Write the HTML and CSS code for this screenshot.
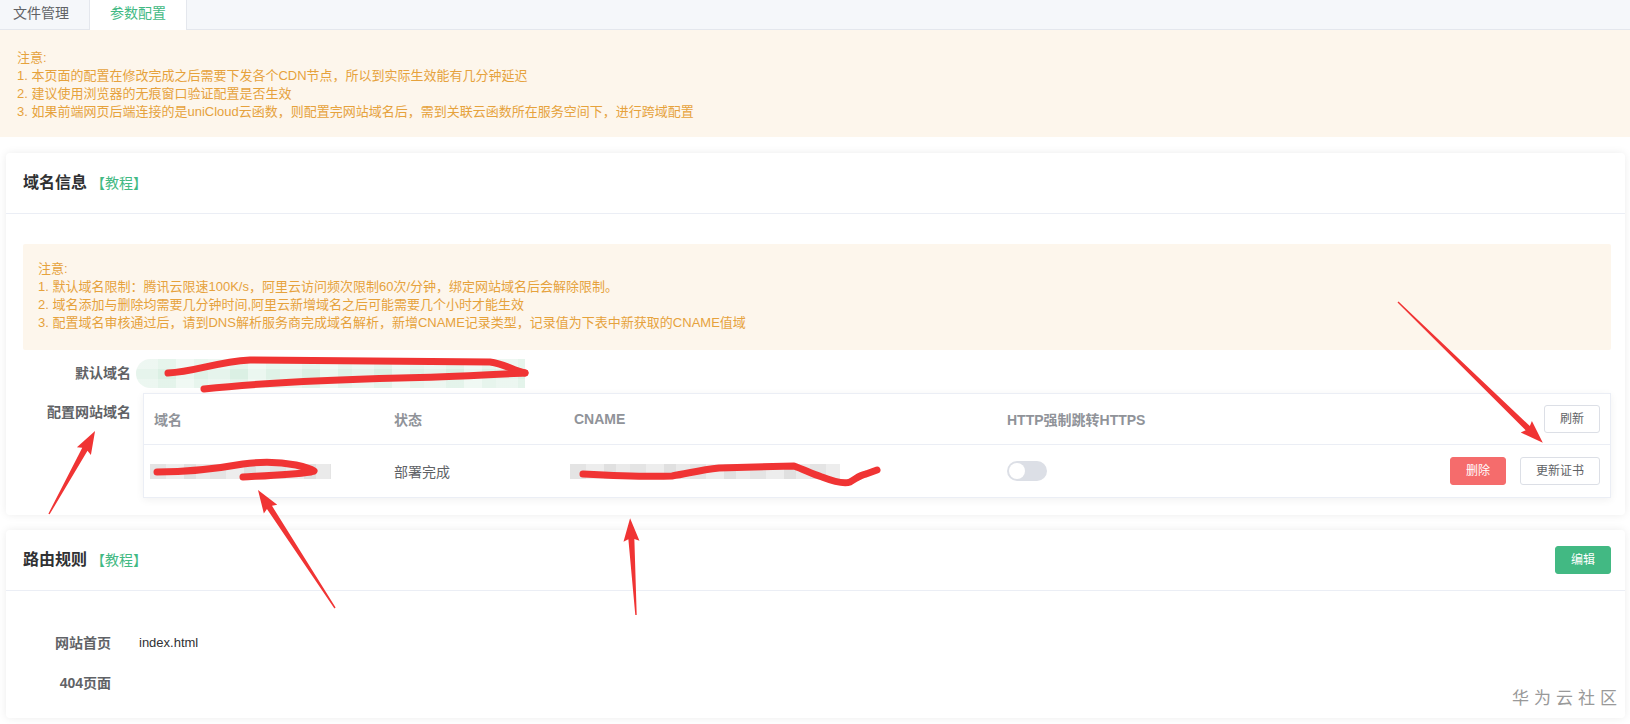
FILE: index.html
```html
<!DOCTYPE html>
<html lang="zh-CN">
<head>
<meta charset="utf-8">
<title>参数配置</title>
<link rel="stylesheet" href="styles.css">
</head>
<body>
  <nav class="tabs">
    <div class="tab">文件管理</div>
    <div class="tab active">参数配置</div>
  </nav>

  <div class="notice notice-top">
    <p>注意:</p>
    <p>1. 本页面的配置在修改完成之后需要下发各个CDN节点，所以到实际生效能有几分钟延迟</p>
    <p>2. 建议使用浏览器的无痕窗口验证配置是否生效</p>
    <p>3. 如果前端网页后端连接的是uniCloud云函数，则配置完网站域名后，需到关联云函数所在服务空间下，进行跨域配置</p>
  </div>

  <main class="content">
    <section class="card">
      <header class="card-header">
        <div class="card-title">域名信息<span class="card-link">【教程】</span></div>
      </header>
      <div class="card-body">
        <div class="notice notice-inner">
          <p>注意:</p>
          <p>1. 默认域名限制：腾讯云限速100K/s，阿里云访问频次限制60次/分钟，绑定网站域名后会解除限制。</p>
          <p>2. 域名添加与删除均需要几分钟时间,阿里云新增域名之后可能需要几个小时才能生效</p>
          <p>3. 配置域名审核通过后，请到DNS解析服务商完成域名解析，新增CNAME记录类型，记录值为下表中新获取的CNAME值域</p>
        </div>

        <div class="form-row form-row-default">
          <div class="form-label">默认域名</div>
          <div class="domain-mask"></div>
        </div>

        <div class="form-row form-row-table">
          <div class="form-label">配置网站域名</div>
          <div class="domain-table">
            <div class="t-row t-head">
              <div class="t-cell">域名</div>
              <div class="t-cell">状态</div>
              <div class="t-cell">CNAME</div>
              <div class="t-cell">HTTP强制跳转HTTPS</div>
              <div class="t-cell t-ops"><button class="btn">刷新</button></div>
            </div>
            <div class="t-row t-body">
              <div class="t-cell"><span class="mask mask-domain"></span></div>
              <div class="t-cell">部署完成</div>
              <div class="t-cell"><span class="mask mask-cname"></span></div>
              <div class="t-cell"><span class="switch"><span class="switch-knob"></span></span></div>
              <div class="t-cell t-ops">
                <button class="btn btn-danger">删除</button>
                <button class="btn">更新证书</button>
              </div>
            </div>
          </div>
        </div>
      </div>
    </section>

    <section class="card">
      <header class="card-header">
        <div class="card-title">路由规则<span class="card-link">【教程】</span></div>
        <button class="btn btn-primary">编辑</button>
      </header>
      <div class="card-body route-body">
        <div class="route-row">
          <div class="route-label">网站首页</div>
          <div class="route-value">index.html</div>
        </div>
        <div class="route-row">
          <div class="route-label">404页面</div>
          <div class="route-value"></div>
        </div>
      </div>
    </section>
  </main>

  <!-- hand-drawn red marks over the page -->
  <svg class="marks" width="1630" height="724" viewBox="0 0 1630 724" aria-hidden="true">
    <g fill="none" stroke="#f03434" stroke-width="7" stroke-linecap="round" stroke-linejoin="round">
      <path d="M168 373 C195 372 215 362 250 360 L490 362 C505 364 512 370 525 373"/>
      <path d="M204 389 C260 383 320 380 400 378 C450 377 500 374 525 373"/>
      <path d="M157 472 C180 472 215 469 243 464 C265 461 280 462 296 465 C305 467 311 469 314 471"/>
      <path d="M243 477 C260 476 290 475 311 472"/>
      <path d="M583 474 C620 476 650 477 672 476 C690 473 700 470 719 468 L794 466 C805 470 812 474 822 477 C835 482 845 484 850 482 C857 478 860 475 866 474 L877 470"/>
    </g>
    <g fill="#f03434">
      <polygon transform="translate(49 514) rotate(-61)" points="0,-0.7 74,-3 72,-8 95,0 72,8 74,3 0,0.7"/>
      <polygon transform="translate(335 608) rotate(-123.1)" points="0,-0.7 120,-3 118,-8 141,0 118,8 120,3 0,0.7"/>
      <polygon transform="translate(636 615) rotate(-93.5)" points="0,-0.7 76,-3 74,-8 97,0 74,8 76,3 0,0.7"/>
      <polygon transform="translate(1398 302) rotate(44.2)" points="0,-0.7 181,-3 179,-8 202,0 179,8 181,3 0,0.7"/>
    </g>
  </svg>

  <div class="watermark">华为云社区</div>
</body>
</html>
```

FILE: styles.css
```css
* {
  box-sizing: border-box;
}

html,
body {
  margin: 0;
}

body {
  position: relative;
  width: 1630px;
  height: 724px;
  overflow: hidden;
  background: #fff;
  font-family: "Liberation Sans", "Noto Sans CJK SC", sans-serif;
  font-size: 13px;
  color: #606266;
}

/* tab strip */
.tabs {
  display: flex;
  height: 30px;
  background: #f5f7fa;
  border-bottom: 1px solid #e4e7ed;
}

.tab {
  padding: 4px 20px 0;
  font-size: 14px;
  line-height: 18px;
  color: #606266;
}

.tab:first-child {
  padding-left: 13px;
}

.tab.active {
  height: 30px;
  background: #fff;
  color: #42b983;
  border-left: 1px solid #e4e7ed;
  border-right: 1px solid #e4e7ed;
}

/* warning notices */
.notice {
  background: #fdf6ec;
  color: #e6a23c;
  font-size: 13px;
  line-height: 18px;
}

.notice p {
  margin: 0;
  white-space: nowrap;
}

.notice-top {
  padding: 19px 17px 16px;
}

.notice-inner {
  padding: 16px 15px 18px;
  border-radius: 2px;
}

/* cards */
.content {
  padding: 16px 5px 0 6px;
}

.card {
  background: #fff;
  border-radius: 4px;
  box-shadow: 0 0 8px rgba(0, 0, 0, 0.08);
}

.card + .card {
  margin-top: 15px;
}

.card-header {
  display: flex;
  align-items: center;
  justify-content: space-between;
  height: 61px;
  padding: 0 14px 0 17px;
  border-bottom: 1px solid #ebeef5;
}

.card-title {
  font-size: 16px;
  font-weight: bold;
  color: #303133;
  line-height: 22px;
}

.card-link {
  margin-left: 4px;
  font-size: 14px;
  font-weight: normal;
  color: #42b983;
}

.card-body {
  padding: 30px 14px 17px 17px;
}

/* form rows */
.form-row {
  display: flex;
}

.form-label {
  width: 108px;
  flex: none;
  text-align: right;
  font-size: 14px;
  font-weight: bold;
  color: #606266;
  line-height: 30px;
}

.form-row-default {
  margin-top: 8px;
  align-items: center;
}

.domain-mask {
  width: 389px;
  height: 29px;
  margin-left: 5px;
  border-radius: 15px 0 0 15px;
  background:
    linear-gradient(180deg, rgba(255, 255, 255, 0.3) 0 35%, rgba(255, 255, 255, 0) 35% 70%, rgba(255, 255, 255, 0.25) 70%),
    repeating-linear-gradient(90deg, #e6f4ec 0 22px, #dbf0e4 22px 40px, #ebf7f0 40px 58px, #dff2e7 58px 72px);
}

.form-row-table {
  margin-top: 5px;
  align-items: flex-start;
}

.form-row-table .form-label {
  padding-top: 4px;
}

/* domain table */
.domain-table {
  flex: 1;
  margin-left: 12px;
  border: 1px solid #ebeef5;
  box-shadow: 0 2px 8px rgba(0, 0, 0, 0.06);
  background: #fff;
}

.t-row {
  display: grid;
  grid-template-columns: 240px 180px 433px 1fr auto;
  align-items: center;
  font-size: 14px;
}

.t-head {
  height: 51px;
  border-bottom: 1px solid #ebeef5;
  color: #909399;
  font-weight: bold;
}

.t-body {
  height: 52px;
  color: #606266;
}

.t-cell {
  padding: 0 10px;
  display: flex;
  align-items: center;
}

.t-ops {
  justify-content: flex-end;
  gap: 14px;
}

.mask {
  display: block;
  height: 15px;
  margin-left: -4px;
  background: repeating-linear-gradient(90deg, #e4e4e4 0 16px, #ededed 16px 34px, #e0e0e0 34px 46px, #eaeaea 46px 60px);
}

.mask-domain {
  width: 181px;
}

.mask-cname {
  width: 270px;
}

/* switch */
.switch {
  position: relative;
  display: block;
  width: 40px;
  height: 20px;
  border-radius: 10px;
  background: #dcdfe6;
}

.switch-knob {
  position: absolute;
  top: 2px;
  left: 2px;
  width: 16px;
  height: 16px;
  border-radius: 50%;
  background: #fff;
}

/* buttons */
.btn {
  height: 28px;
  padding: 0 15px;
  border: 1px solid #dcdfe6;
  border-radius: 3px;
  background: #fff;
  color: #606266;
  font-family: inherit;
  font-size: 12px;
  line-height: 26px;
}

.btn-danger {
  background: #f56c6c;
  border-color: #f56c6c;
  color: #fff;
}

.btn-primary {
  background: #42b983;
  border-color: #42b983;
  color: #fff;
}

/* route rules */
.route-body {
  padding: 31px 17px 16px;
}

.route-row {
  display: flex;
  align-items: center;
  height: 40px;
}

.route-label {
  width: 88px;
  text-align: right;
  font-size: 14px;
  font-weight: bold;
  color: #606266;
}

.route-value {
  margin-left: 28px;
  font-size: 13px;
  color: #303133;
}

/* overlay marks */
.marks {
  position: absolute;
  top: 0;
  left: 0;
  pointer-events: none;
}

.watermark {
  position: absolute;
  right: 13px;
  bottom: 16px;
  font-family: "Noto Sans CJK SC", sans-serif;
  font-size: 17px;
  line-height: 22px;
  letter-spacing: 5px;
  margin-right: -5px;
  color: #999;
}
```
